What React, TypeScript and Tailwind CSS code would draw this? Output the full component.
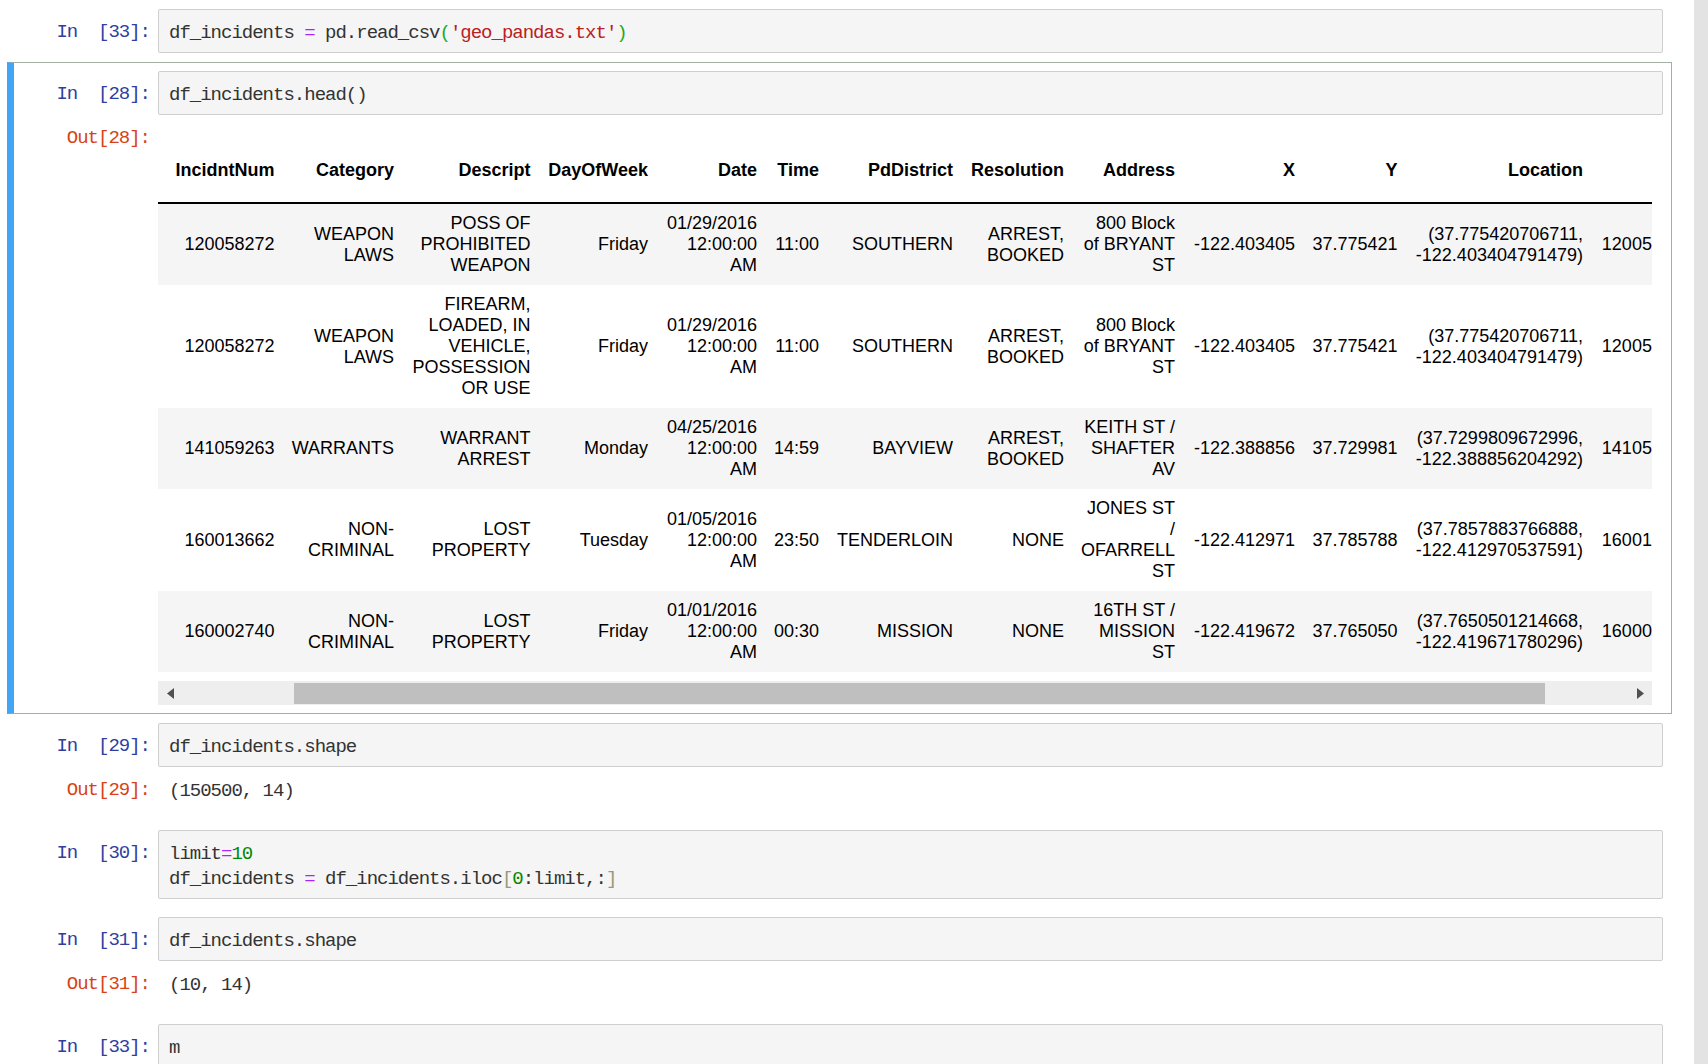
import React from 'react'

const mono = "font-['Liberation_Mono',monospace] text-[19px] tracking-[-1px] leading-[25px]"

type Row = {
  cells: string[]
}

const columns = [
  { name: 'IncidntNum', w: 'w-[125.5px]' },
  { name: 'Category', w: 'w-[119.5px]' },
  { name: 'Descript', w: 'w-[136.5px]' },
  { name: 'DayOfWeek', w: 'w-[117.5px]' },
  { name: 'Date', w: 'w-[109px]' },
  { name: 'Time', w: 'w-[62px]' },
  { name: 'PdDistrict', w: 'w-[134px]' },
  { name: 'Resolution', w: 'w-[111px]' },
  { name: 'Address', w: 'w-[111px]' },
  { name: 'X', w: 'w-[120px]' },
  { name: 'Y', w: 'w-[102.5px]' },
  { name: 'Location', w: 'w-[185.5px]' },
  { name: 'PdId', w: 'w-[159px]' },
]

// line breaks follow the wrapping in the notebook output
const rows: Row[] = [
  {
    cells: ['120058272', 'WEAPON\nLAWS', 'POSS OF\nPROHIBITED\nWEAPON', 'Friday', '01/29/2016\n12:00:00\nAM', '11:00', 'SOUTHERN', 'ARREST,\nBOOKED', '800 Block\nof BRYANT\nST', '-122.403405', '37.775421', '(37.775420706711,\n-122.403404791479)', '12005827212120'],
  },
  {
    cells: ['120058272', 'WEAPON\nLAWS', 'FIREARM,\nLOADED, IN\nVEHICLE,\nPOSSESSION\nOR USE', 'Friday', '01/29/2016\n12:00:00\nAM', '11:00', 'SOUTHERN', 'ARREST,\nBOOKED', '800 Block\nof BRYANT\nST', '-122.403405', '37.775421', '(37.775420706711,\n-122.403404791479)', '12005827212168'],
  },
  {
    cells: ['141059263', 'WARRANTS', 'WARRANT\nARREST', 'Monday', '04/25/2016\n12:00:00\nAM', '14:59', 'BAYVIEW', 'ARREST,\nBOOKED', 'KEITH ST /\nSHAFTER\nAV', '-122.388856', '37.729981', '(37.7299809672996,\n-122.388856204292)', '14105926363010'],
  },
  {
    cells: ['160013662', 'NON-\nCRIMINAL', 'LOST\nPROPERTY', 'Tuesday', '01/05/2016\n12:00:00\nAM', '23:50', 'TENDERLOIN', 'NONE', 'JONES ST\n/\nOFARRELL\nST', '-122.412971', '37.785788', '(37.7857883766888,\n-122.412970537591)', '16001366271000'],
  },
  {
    cells: ['160002740', 'NON-\nCRIMINAL', 'LOST\nPROPERTY', 'Friday', '01/01/2016\n12:00:00\nAM', '00:30', 'MISSION', 'NONE', '16TH ST /\nMISSION\nST', '-122.419672', '37.765050', '(37.7650501214668,\n-122.419671780296)', '16000274071000'],
  },
]

function Prompt({ kind, n }: { kind: 'in' | 'out'; n: number }) {
  return (
    <div
      className={`w-[136px] shrink-0 pr-[8px] pt-[11px] text-right whitespace-pre ${mono} ${
        kind === 'in' ? 'text-[#303F9F]' : 'text-[#D84315]'
      }`}
    >
      {kind === 'in' ? `In  [${n}]:` : `Out[${n}]:`}
    </div>
  )
}

function Input({ n, children }: { n: number; children: React.ReactNode }) {
  return (
    <div className="flex min-w-0">
      <Prompt kind="in" n={n} />
      <div className={`min-w-0 flex-1 rounded-[2px] border border-[#cfcfcf] bg-[#f5f5f5] px-[10px] py-[8.5px] whitespace-pre text-[#333] ${mono}`}>
        <div className="translate-y-[1.5px]">{children}</div>
      </div>
    </div>
  )
}

function TextOutput({ n, text }: { n: number; text: string }) {
  return (
    <div className="flex min-w-0">
      <Prompt kind="out" n={n} />
      <div className={`flex-1 px-[11px] py-[10px] whitespace-pre text-[#333] ${mono}`}>
        <div className="translate-y-[1.5px]">{text}</div>
      </div>
    </div>
  )
}

function Cell({ selected, children }: { selected?: boolean; children: React.ReactNode }) {
  return (
    <div
      className={`flex min-w-0 flex-col border border-l-[7px] p-[8px] ${
        selected ? 'border-[#a4b0a4] border-l-[#42A5F5]' : 'border-transparent'
      }`}
    >
      {children}
    </div>
  )
}

function Arrow({ dir }: { dir: 'left' | 'right' }) {
  return (
    <svg width="7" height="11" viewBox="0 0 7 11">
      {dir === 'left' ? <path d="M7 0 L0 5.5 L7 11 Z" fill="#505050" /> : <path d="M0 0 L7 5.5 L0 11 Z" fill="#505050" />}
    </svg>
  )
}

function DataFrame() {
  return (
    <div className="flex min-w-0">
      <Prompt kind="out" n={28} />
      <div className="mr-[11px] min-w-0 flex-1 overflow-hidden pt-[36px]">
        <table className="w-[1593px] table-fixed border-collapse font-['Liberation_Sans',Arial,sans-serif] text-[18px] leading-[21px] text-black">
          <colgroup>
            {columns.map(c => (
              <col key={c.name} className={c.w} />
            ))}
          </colgroup>
          <thead>
            <tr>
              {columns.map(c => (
                <th
                  key={c.name}
                  className="border-b-2 border-black pb-[21px] pl-[4px] pr-[9px] pt-[9px] text-right align-bottom font-bold whitespace-nowrap"
                >
                  {c.name}
                </th>
              ))}
            </tr>
          </thead>
          <tbody>
            {rows.map((r, i) => (
              <tr key={i} className={i % 2 === 0 ? 'bg-[#f5f5f5]' : 'bg-white'}>
                {r.cells.map((v, j) => (
                  <td key={j} className="py-[9px] pl-[4px] pr-[9px] text-right align-middle whitespace-pre-line">
                    {v}
                  </td>
                ))}
              </tr>
            ))}
          </tbody>
        </table>
        <div className="mt-[9px] flex h-[24px] items-center bg-[#eeeeee]">
          <div className="flex w-[136px] shrink-0 items-center pl-[9px]">
            <Arrow dir="left" />
          </div>
          <div className="h-[21px] w-[1251px] shrink-0 bg-[#bfbfbf]" />
          <div className="flex flex-1 justify-end pr-[8px]">
            <Arrow dir="right" />
          </div>
        </div>
      </div>
    </div>
  )
}

export default function App() {
  return (
    <div className="flex h-[1064px] overflow-hidden bg-white">
      <div className="min-w-0 flex-1 pl-[7px] pr-[22px]">
        <Cell>
          <Input n={33}>
            df_incidents <span className="text-[#AA22FF]">=</span> pd.read_csv
            <span className="text-[#22aa22]">(</span>
            <span className="text-[#BA2121]">'geo_pandas.txt'</span>
            <span className="text-[#22aa22]">)</span>
          </Input>
        </Cell>

        <Cell selected>
          <Input n={28}>df_incidents.head()</Input>
          <DataFrame />
        </Cell>

        <Cell>
          <Input n={29}>df_incidents.shape</Input>
          <TextOutput n={29} text="(150500, 14)" />
        </Cell>

        <Cell>
          <Input n={30}>
            limit<span className="text-[#AA22FF]">=</span>
            <span className="text-[#008800]">10</span>
            {'\n'}df_incidents <span className="text-[#AA22FF]">=</span> df_incidents.iloc
            <span className="text-[#999977]">[</span>
            <span className="text-[#008800]">0</span>:limit,:
            <span className="text-[#999977]">]</span>
          </Input>
        </Cell>

        <Cell>
          <Input n={31}>df_incidents.shape</Input>
          <TextOutput n={31} text="(10, 14)" />
        </Cell>

        <Cell>
          <Input n={33}>m</Input>
        </Cell>
      </div>
      <div className="w-[14px] shrink-0 bg-[#e3e3e3]" />
    </div>
  )
}
